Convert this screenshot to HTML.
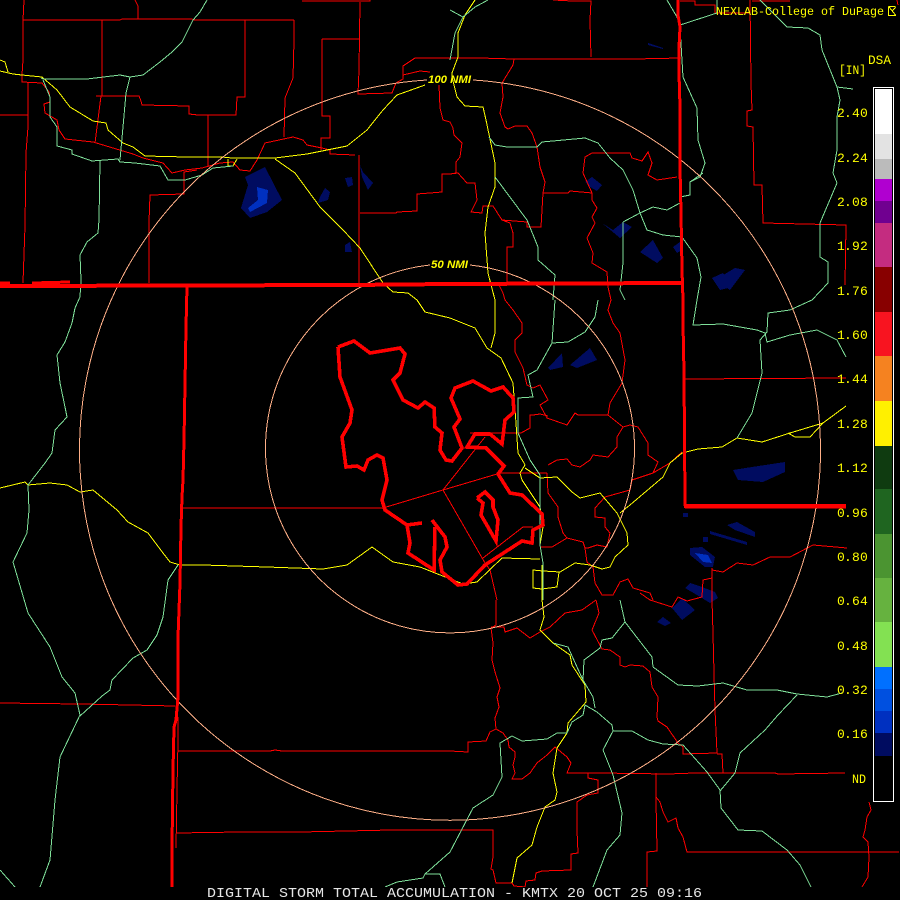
<!DOCTYPE html>
<html>
<head>
<meta charset="utf-8">
<style>
html,body{margin:0;padding:0;background:#000;width:900px;height:900px;overflow:hidden}
svg{display:block}
text{font-family:"Liberation Mono",monospace;fill:#ff0}
</style>
</head>
<body>
<svg width="900" height="900" viewBox="0 0 900 900" xmlns="http://www.w3.org/2000/svg" shape-rendering="crispEdges">
<rect width="900" height="900" fill="#000"/>

<!-- echoes -->
<g fill="#000c60">
<polygon points="265,167 282,200 267,212 250,218 241,208 248,185 245,177"/>
<polygon points="345,178 352,177 353,185 348,187"/>
<polygon points="325,188 330,192 328,200 318,203 320,197"/>
<polygon points="360,165 363,172 373,183 368,190 362,177"/>
<polygon points="345,245 350,242 352,252 345,252"/>
<polygon points="585,182 592,177 602,185 597,191 590,187"/>
<polygon points="602,223 613,230 623,222 632,227 620,238"/>
<polygon points="640,252 653,240 663,258 657,263"/>
<polygon points="673,247 680,242 682,250 677,253"/>
<polygon points="712,278 723,273 732,287 720,290"/>
<polygon points="648,43 663,48 663,49 648,45"/>
<polygon points="570,365 590,348 597,360 577,368"/>
<polygon points="548,368 562,353 563,367 550,370"/>
<polygon points="733,470 752,467 785,462 785,472 763,482 738,480"/>
<polygon points="727,525 737,522 755,532 755,537 735,530"/>
<polygon points="710,531 747,542 747,545 710,534"/>
<polygon points="690,548 702,547 715,557 713,567 705,567 690,555"/>
<polygon points="683,513 688,513 688,517 683,517"/>
<polygon points="703,537 708,537 708,542 703,542"/>
<polygon points="685,588 690,583 702,587 715,592 718,598 710,603 697,595"/>
<polygon points="672,608 682,598 695,610 682,620"/>
<polygon points="657,622 663,617 671,623 665,626"/>
<polygon points="715,280 735,268 745,270 730,290"/>
</g>
<g fill="#0030c0">
<polygon points="257,187 268,190 267,203 250,212 248,208 258,200"/>
<polygon points="695,553 708,555 712,563 703,562"/>
</g>

<g fill="none" stroke-linejoin="miter" stroke-linecap="butt">

<!-- thin counties -->
<g stroke="#f00" stroke-width="1">
<polyline points="24,0 23,20 23,60 22,75 22,82 42,83 49,92 50,98"/>
<polyline points="23,20 120,20 122,19 192,19 194,20 294,20"/>
<polyline points="135,0 138,6 138,19"/>
<polyline points="102,20 102,96 101,96 95,143"/>
<polyline points="245,20 245,97 237,97 236,115 198,115 189,114 189,106 142,105 141,101 139,96 96,96"/>
<polyline points="294,20 294,40 293,78 285,98 284,137"/>
<polyline points="208,115 208,166"/>
<polyline points="302,1 370,1 370,0"/>
<polyline points="360,2 359,70 358,94 392,93 396,83 403,79 403,66 415,58 450,58 480,58 514,59 634,59 681,58"/>
<polyline points="322,39 359,39"/>
<polyline points="322,39 322,116 330,116 330,138 321,138 321,150"/>
<polyline points="403,75 420,71 430,72"/>
<polyline points="553,0 572,1 591,1 590,20 591,57"/>
<polyline points="439,85 440,108 443,120 450,122 453,128 454,135 462,143 460,157 456,162 456,173 450,174 442,174 442,192 430,193 417,194 417,211 397,212 396,213 360,213"/>
<polyline points="359,155 359,283"/>
<polyline points="50,102 44,104 45,113 57,120 59,130 65,139 93,142 103,145 133,154 143,158 163,163 172,173 185,170 202,168 220,163 233,162 240,170 250,171 257,160 265,143 293,137 303,140 307,145 322,148 330,150 330,154 355,155"/>
<polyline points="28,83 28,127 26,153 25,226 23,283"/>
<polyline points="0,115 28,115"/>
<polyline points="149,283 149,222 150,195 184,194 184,172 197,170"/>

<polyline points="178,717 178,740 177,790 176,848"/>
<polyline points="183,508 383,508"/>
<polyline points="0,703 80,704 130,705 175,706"/>
<polyline points="178,751 270,751 275,750 282,751 450,751 468,752 468,742 486,741 490,732 496,729 503,733 508,740 509,747 515,752 515,757 513,765 515,773 512,779 522,779 530,773 537,763 547,755 555,747 567,757 571,763 567,773 600,773 668,774 695,773 737,773 775,773 778,774 845,773"/>
<polyline points="176,833 240,832 300,832 392,830 450,830 493,830 493,857 491,869 493,870 496,883 512,883 514,886 525,887 526,881 535,880 536,873 542,871 571,870 571,854 578,853 577,830 577,802 587,795 598,793 598,780 588,778 588,773"/>
<polyline points="656,773 656,800 657,851 647,852 647,887"/>
<polyline points="656,797 660,802 663,812 668,822 676,818 678,828 683,837 687,852 899,852"/>
<polyline points="869,802 871,810 867,817 865,830 863,837 868,842 869,857 868,877 862,887"/>
<polyline points="712,568 712,600 713,633 714,673 715,710 717,753 683,754 683,747 678,743 667,727 658,721 657,717 658,697 652,687 650,672 643,666 630,665 625,667 620,665 620,657 610,650 602,649 592,630 599,613 596,600"/>
<polyline points="717,754 722,754 723,773"/>
<polyline points="496,600 496,625 491,628 493,643 492,660 495,672 500,688 497,697 499,707 495,718 496,729"/>
<polyline points="491,627 504,627 505,632 517,628 530,638 540,632 550,627 565,613 582,610 596,600"/>
<polyline points="640,593 650,600 672,607 678,597 687,601 702,597 703,580 712,578"/>

<polyline points="505,300 513,310 522,323 522,333 515,340 515,352 523,368 527,385 533,388 540,385 548,400 540,405 547,418 567,425 575,413 578,415 608,415 623,427 630,425 638,427 648,443 648,455 658,462 653,473 632,480 630,490 605,497 595,508 595,517 605,518 605,527 610,533 607,547 597,545 588,548 585,548 583,542 567,538 552,547 540,547"/>
<polyline points="470,433 521,433 530,428 530,415 533,415 540,414 548,416"/>
<polyline points="500,473 547,473"/>
<polyline points="548,465 557,460 567,459 572,465 580,467 590,460 593,455 608,457 617,447 617,437 623,427"/>
<polyline points="547,473 548,493 558,507 558,517 563,533 567,538"/>
<polyline points="653,473 670,463 682,452"/>
<polyline points="490,570 497,600"/>
<polyline points="585,548 587,562 593,567 595,583 602,595 613,595 620,582 628,579 633,588 650,593 653,600"/>
<polyline points="712,570 723,572 737,563 753,565 770,557 790,557 813,545 847,548"/>

<polyline points="684,379 846,378"/>
<polyline points="685,508 846,508"/>
<polyline points="680,1 695,1 695,5 715,5 715,13 750,13"/>
<polyline points="750,0 751,83 752,110 747,111 747,126 753,127 754,185 762,185 763,223 846,225 845,285"/>
<polyline points="752,1 790,1"/>
<polyline points="897,0 898,5"/>
<polyline points="450,174 458,173 467,183 475,183 477,200 471,212 482,213 483,206 493,206 502,220 527,222 527,227 541,227 543,193 568,193 570,191 592,193"/>
<polyline points="502,220 510,223 513,233 513,247 507,247 507,283"/>
<polyline points="543,193 545,182 540,167 537,147 532,133 527,126 515,126 508,129 505,127 500,113 503,97 502,83 513,65 514,59"/>
<polyline points="592,193 592,200 597,208 592,217 595,223 587,238 593,253 592,263 607,272 608,287 611,300 608,310 613,323 620,333 625,360 622,383 610,403 608,415"/>
<polyline points="592,193 583,173 585,157 592,153 630,153 632,158 642,161 648,152 652,163 648,175 657,180 677,177"/>
<polyline points="498,283 503,293 505,300"/>
<!-- thin lines inside area -->
<polyline points="383,508 443,490 497,474"/>
<polyline points="443,490 477,447 485,437"/>
<polyline points="443,490 485,563 490,570"/>
<polyline points="483,558 523,527 533,527"/>
</g>

<!-- yellow -->
<g stroke="#ff0" stroke-width="1">
<polyline points="0,60 5,62 8,72"/>
<polyline points="0,71 13,74 22,75 42,77 57,90 70,107 93,121 106,123 108,130 123,143 133,147 145,156 187,157 222,157 232,158 275,158 307,154 347,146 367,130 383,110 397,95 425,85"/>
<polyline points="275,159 295,173 320,207 343,230 360,248 383,283 393,292 408,293 417,300 425,312 450,318 475,328 487,348 501,358 513,383 516,423 518,453 524,463 525,465 520,473 522,480 540,507 543,527 540,545"/>
<polyline points="475,0 465,15 458,33 458,57 452,73 452,77 457,97 465,106 483,107 486,120 495,163 495,187 488,207 485,233 488,273 495,300 495,333 491,348"/>
<polyline points="525,468 540,478 557,477 572,492 580,498 600,493 617,513 627,533 628,545 615,557 610,567 602,569 590,565 575,563 560,572 543,571 533,570 533,588 542,589 557,587 559,572"/>
<polyline points="620,513 630,505 663,477 670,463 682,453 698,449 722,447 737,438 762,442 790,433 823,423 846,406"/>
<polyline points="788,433 795,437 810,437 823,423"/>
<polyline points="463,584 477,582 502,558 540,559"/>
<polyline points="0,488 25,482 28,485 50,483 67,485 80,492 93,490 117,510 128,522 148,533 163,553 170,562 180,565 203,565 267,567 323,569 347,565 372,547 393,562 420,567 463,584"/>
<polyline points="228,159 228,166 233,166 237,159"/>
<polyline points="542,565 542,600 544,617 540,630 553,643 570,655 572,665 585,685 586,702 568,723 567,733 557,748 553,773 557,792 555,800 545,807 537,827 532,845 517,858 512,883"/>
</g>

<!-- green -->
<g stroke="#7fe09a" stroke-width="1">
<polyline points="207,0 200,12 193,20 182,42 172,52 160,62 143,75 130,77 120,75 87,79 43,79 41,78"/>
<polyline points="43,80 50,97 50,117 57,127 57,146 72,150 72,154 92,161 118,159 120,162 135,163 160,166 168,180 185,180 202,175 213,168 233,166"/>
<polyline points="130,77 126,93 123,127 120,160"/>
<polyline points="100,160 99,220 98,233 87,242 80,255 81,280 80,297 75,308 72,323 65,342 57,355 60,383 65,407 67,417 55,430 52,453 45,463 28,485 29,510 27,533 13,562 28,613 50,647 62,677 75,693 80,715 60,757 55,800 50,860 40,887"/>
<polyline points="0,870 15,887"/>
<polyline points="178,565 168,580 163,617 157,635 147,650 133,658 112,680 110,690 102,696 80,716"/>
<polyline points="385,887 397,882 423,878 425,874 440,874 445,887"/>
<polyline points="425,874 450,852 473,808 493,795 502,777 500,743 512,736 522,741 547,739 557,733 567,733 572,722 583,715 585,705 597,712 612,725 613,731 632,731 648,740 663,744 683,745 707,772 720,790 721,808 738,830 762,831 787,850 800,865 811,887"/>
<polyline points="613,731 603,750 613,775 622,813 620,835 607,850 593,887"/>
<polyline points="720,791 735,773 740,753 765,730 778,715 797,695"/>
<polyline points="653,667 678,685 698,686 723,683 747,690 777,690 797,694 827,697 842,693"/>
<polyline points="625,622 612,638 602,640 600,648 584,660 583,680 593,697 595,708"/>
<polyline points="625,622 652,657 653,667"/>
<polyline points="620,600 625,622"/>
<polyline points="553,643 568,647 577,667 583,680"/>
<polyline points="555,300 552,343 537,370 528,375 533,397 518,398 518,433 530,460 540,475 540,507 540,545 543,563 543,600"/>
<polyline points="598,300 595,317 585,332 568,342 552,343"/>
<polyline points="450,10 463,17 475,7 488,0"/>
<polyline points="463,17 455,33 450,60"/>
<polyline points="489,137 495,145 507,147 537,147 542,142 585,138 598,143 610,158 623,170 633,190 640,213 647,230 663,235 682,237 697,258 701,277 697,300 693,325 723,324 757,330 765,333 767,342 790,335 817,330 837,340 846,357"/>
<polyline points="495,177 527,220 538,247 538,260 555,275 553,300"/>
<polyline points="623,222 623,263 620,290 625,300"/>
<polyline points="640,213 653,207 667,210 680,203 680,197 690,195 690,182 703,173"/>
<polyline points="640,213 623,222"/>
<polyline points="680,25 717,13 717,0"/>
<polyline points="667,0 677,17 680,27 683,77 697,108 698,140 705,163 700,177 690,182"/>
<polyline points="760,0 787,27 808,28 820,35 822,50 837,87 840,100 837,117 837,150 833,173 837,183 820,223 820,257 828,262 828,283 812,300 790,310 768,313 767,332 760,340 762,373 752,413 737,438"/>
<polyline points="837,87 853,89"/>
</g>

<!-- range rings -->
<g stroke="#ffb088" stroke-width="1">
<path d="M473 80 A370.5 370.5 0 1 1 427 80"/>
<path d="M470 265 A184.5 184.5 0 1 1 430 265"/>
</g>

<!-- thick state lines -->
<g stroke="#f00" stroke-width="4">
<polyline points="0,286 12,286 350,285 450,284 682,283"/>
<polyline points="684,506 846,506"/>
</g>
<g stroke="#f00" stroke-width="3">
<polyline points="187,286 186,327 185,384 184,440 183,480 182,497 181,527 180,583 178,637 178,697 176,720 174,727 173,770 172,847 172,887"/>
<polyline points="678,0 678,15 680,27 679,47 679,73 680,107 680,167 681,213 682,270 683,300 683,323 684,373 685,503 685,506"/>
<polyline points="0,283 10,283"/>
<polyline points="32,283 70,282"/>
</g>

<!-- storm outline -->
<g stroke="#f00" stroke-width="3.6">
<polyline points="338,347 354,341 370,353 400,348 405,354 400,373 393,380 403,400 418,408 425,402 434,408 435,427 442,433 440,450 446,460 452,461 462,448 454,427 460,419 451,398 455,388 473,381 491,391 503,387 513,398 514,412 505,420 502,444 490,434 475,434 467,447 486,448 504,466 498,474 510,493 522,495 542,514 543,525 533,530 532,543 522,541 485,565 467,584 458,585 442,572 440,560 447,547 445,537 432,520"/>
<polyline points="435,527 434,570 408,553 410,543 407,525 422,523"/>
<polyline points="407,525 385,510 382,500 387,480 383,458 377,455 368,460 364,470 357,466 346,467 342,437 350,423 352,410 340,377 338,347"/>
<polyline points="477,498 485,492 493,500 493,507 498,520 496,541 481,515 483,503 477,498"/>
</g>
</g>

<!-- bottom black band -->
<rect x="0" y="887" width="900" height="13" fill="#000"/>

<!-- color bar -->
<g shape-rendering="crispEdges">
<rect x="875" y="89" width="17" height="45" fill="#fff"/>
<rect x="875" y="134" width="17" height="25" fill="#e3e3e3"/>
<rect x="875" y="159" width="17" height="20" fill="#bbb"/>
<rect x="875" y="179" width="17" height="22" fill="#b000d0"/>
<rect x="875" y="201" width="17" height="22" fill="#700090"/>
<rect x="875" y="223" width="17" height="44" fill="#c42c80"/>
<rect x="875" y="267" width="17" height="45" fill="#880000"/>
<rect x="875" y="312" width="17" height="44" fill="#f81420"/>
<rect x="875" y="356" width="17" height="45" fill="#f58220"/>
<rect x="875" y="401" width="17" height="45" fill="#fff000"/>
<rect x="875" y="446" width="17" height="43" fill="#0f3b10"/>
<rect x="875" y="489" width="17" height="45" fill="#1f6520"/>
<rect x="875" y="534" width="17" height="44" fill="#4b9431"/>
<rect x="875" y="578" width="17" height="44" fill="#66b23f"/>
<rect x="875" y="622" width="17" height="45" fill="#83e152"/>
<rect x="875" y="667" width="17" height="22" fill="#0070ff"/>
<rect x="875" y="689" width="17" height="22" fill="#0050e0"/>
<rect x="875" y="711" width="17" height="22" fill="#0030c0"/>
<rect x="875" y="733" width="17" height="23" fill="#000c60"/>
<rect x="873.5" y="87.5" width="20" height="714" fill="none" stroke="#fff" stroke-width="1"/>
</g>

<!-- labels -->
<g font-size="13">
<text x="837 844 852 860" y="117">2.40</text>
<text x="837 844 852 860" y="162">2.24</text>
<text x="837 844 852 860" y="206">2.08</text>
<text x="837 844 852 860" y="250">1.92</text>
<text x="837 844 852 860" y="295">1.76</text>
<text x="837 844 852 860" y="339">1.60</text>
<text x="837 844 852 860" y="383">1.44</text>
<text x="837 844 852 860" y="428">1.28</text>
<text x="837 844 852 860" y="472">1.12</text>
<text x="837 844 852 860" y="517">0.96</text>
<text x="837 844 852 860" y="561">0.80</text>
<text x="837 844 852 860" y="605">0.64</text>
<text x="837 844 852 860" y="650">0.48</text>
<text x="837 844 852 860" y="694">0.32</text>
<text x="837 844 852 860" y="738">0.16</text>
<text x="852" y="783" textLength="14" lengthAdjust="spacingAndGlyphs">ND</text>
<text x="839" y="74" textLength="27" lengthAdjust="spacingAndGlyphs">[IN]</text>
<text x="868" y="64" textLength="23" lengthAdjust="spacingAndGlyphs">DSA</text>
</g>
<text x="716" y="15" font-size="12" textLength="168" lengthAdjust="spacingAndGlyphs">NEXLAB-College of DuPage</text>
<path d="M888.5 6.5H895.5M888.5 6.5V15.5H896M889 7L895.5 15M892 11L895.5 7.5" fill="none" stroke="#ff0" stroke-width="1"/>
<text x="207" y="897" font-size="13.5" textLength="495" lengthAdjust="spacingAndGlyphs" style="fill:#e6e6e6">DIGITAL STORM TOTAL ACCUMULATION - KMTX 20 OCT 25 09:16</text>
<g shape-rendering="auto">
<text x="428" y="83" font-size="11" font-style="italic" font-weight="bold" textLength="43" lengthAdjust="spacingAndGlyphs" style="font-family:'Liberation Sans',sans-serif">100 NMI</text>
<text x="431" y="268" font-size="11" font-style="italic" font-weight="bold" textLength="37" lengthAdjust="spacingAndGlyphs" style="font-family:'Liberation Sans',sans-serif">50 NMI</text>
</g>
</svg>
</body>
</html>
